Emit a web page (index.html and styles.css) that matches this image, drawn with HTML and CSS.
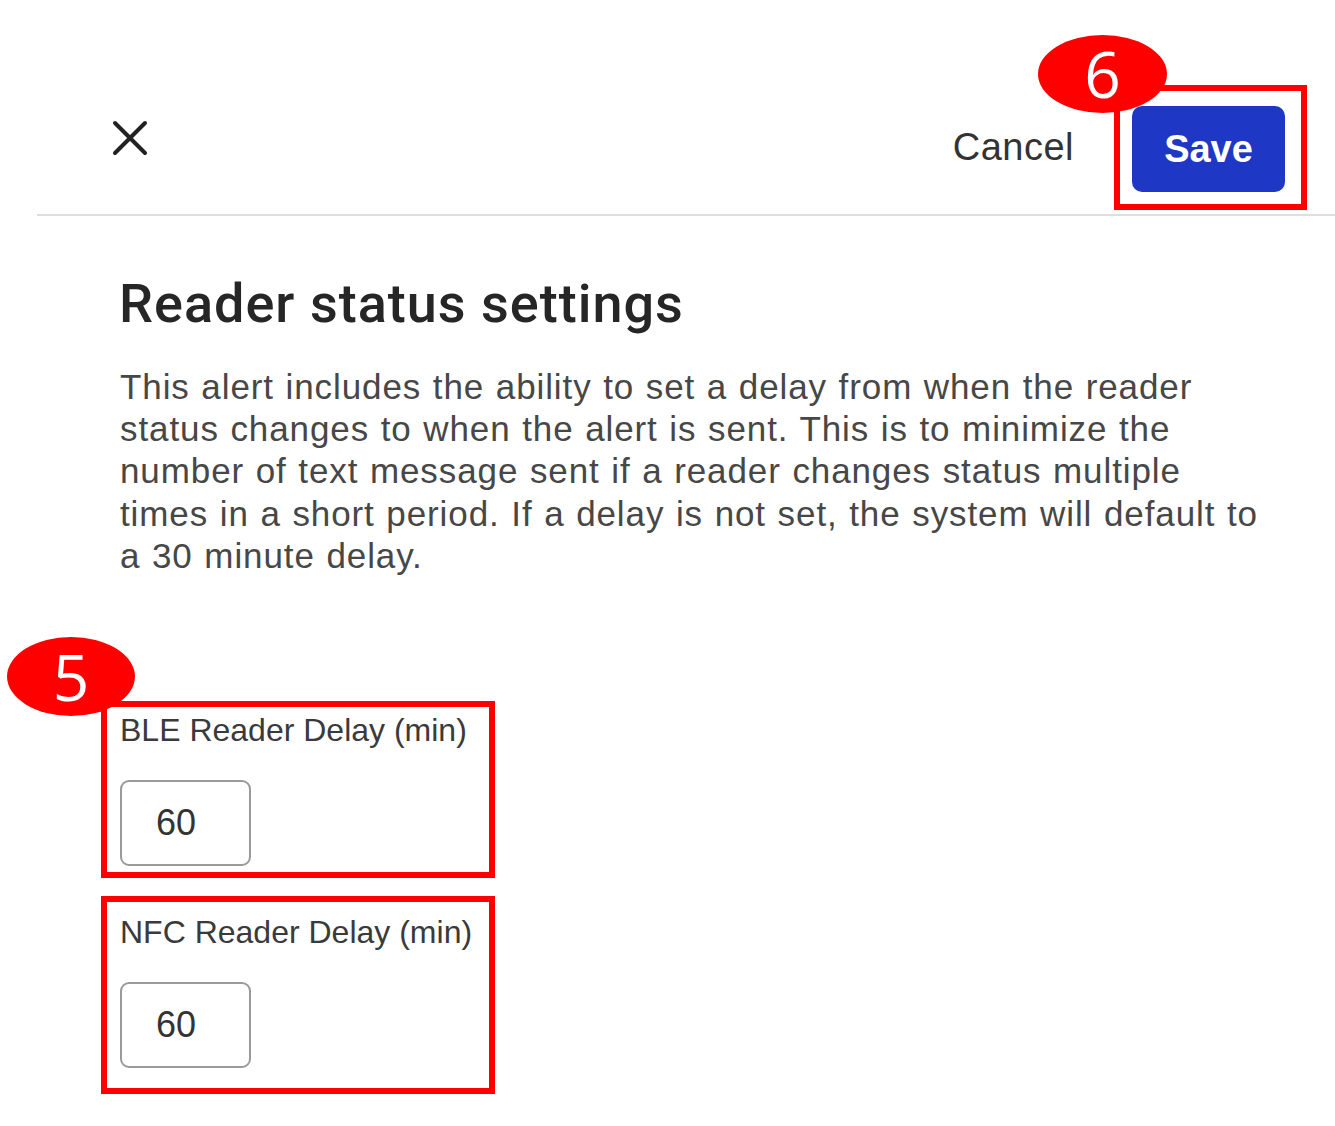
FILE: index.html
```html
<!DOCTYPE html>
<html lang="en">
<head>
    <meta charset="UTF-8">
    <meta name="viewport" content="width=device-width, initial-scale=1.0">
    <title>Reader status settings</title>
    <link rel="stylesheet" href="styles.css">
</head>
<body>

    <div class="panel">
        <div class="panel-header">
            <button class="close-btn" aria-label="Close">
                <svg width="36" height="36" viewBox="0 0 36 36">
                    <path d="M3 3 L33 33 M33 3 L3 33" stroke="#222" stroke-width="4" stroke-linecap="round" fill="none"/>
                </svg>
            </button>
            <div class="header-actions">
                <button class="cancel-btn">Cancel</button>
                <div class="callout callout-save">
                    <span class="marker marker-6">6</span>
                    <button class="save-btn">Save</button>
                </div>
            </div>
        </div>

        <div class="content">
            <h2 class="title">Reader status settings</h2>
            <p class="description">
                This alert includes the ability to set a delay from when the reader<br>
                status changes to when the alert is sent. This is to minimize the<br>
                number of text message sent if a reader changes status multiple<br>
                times in a short period. If a delay is not set, the system will default to<br>
                a 30 minute delay.
            </p>

            <div class="fields">
                <div class="callout field-box">
                    <span class="marker marker-5">5</span>
                    <label for="ble-delay">BLE Reader Delay (min)</label>
                    <input type="text" id="ble-delay" value="60">
                </div>
                <div class="callout field-box field-box-nfc">
                    <label for="nfc-delay">NFC Reader Delay (min)</label>
                    <input type="text" id="nfc-delay" value="60">
                </div>
            </div>
        </div>
    </div>

</body>
</html>
```

FILE: styles.css
```css
body {
    font-family: "Liberation Sans", Arial, sans-serif;
    background-color: #fff;
    margin: 0;
    color: #222;
}
.panel {
    width: 1335px;
}
.panel-header {
    display: flex;
    align-items: center;
    margin-left: 37px;
    padding: 85px 28px 4px 75px;
    border-bottom: 2px solid #dedede;
}
.close-btn {
    background: none;
    border: none;
    padding: 0;
    width: 36px;
    height: 36px;
    margin-bottom: 19px;
    cursor: pointer;
}
.close-btn svg {
    display: block;
}
.header-actions {
    margin-left: auto;
    display: flex;
    align-items: center;
}
.cancel-btn {
    background: none;
    border: none;
    padding: 0;
    font-family: inherit;
    font-size: 38px;
    letter-spacing: 0.5px;
    color: #333;
    margin-right: 40px;
    cursor: pointer;
}
.callout {
    position: relative;
    border: 6px solid #f00;
}
.callout-save {
    padding: 15px 16px 12px 12px;
}
.save-btn {
    display: block;
    width: 153px;
    height: 86px;
    background-color: #1e37c4;
    color: white;
    border: none;
    border-radius: 10px;
    font-family: inherit;
    font-size: 38px;
    font-weight: bold;
    cursor: pointer;
}
.marker {
    position: absolute;
    display: flex;
    align-items: center;
    justify-content: center;
    background-color: #f00;
    color: white;
    border-radius: 50%;
    font-family: "Open Sans", sans-serif;
    font-size: 64px;
    line-height: 1;
    z-index: 2;
}
.marker-6 {
    width: 129px;
    height: 78px;
    left: -82px;
    top: -56px;
}
.marker-5 {
    width: 128px;
    height: 79px;
    left: -100px;
    top: -70px;
}
.content {
    padding-left: 101px;
}
.title {
    font-family: Roboto, "Liberation Sans", sans-serif;
    font-size: 54px;
    font-weight: 500;
    line-height: 60px;
    letter-spacing: 1px;
    margin: 58px 0 0 18px;
    color: #262626;
}
.description {
    font-size: 35px;
    line-height: 42.2px;
    letter-spacing: 0.9px;
    word-spacing: 1px;
    color: #474747;
    margin: 32px 0 0 19px;
    white-space: nowrap;
}
.fields {
    margin-top: 124px;
    display: flex;
    flex-direction: column;
    gap: 18px;
    width: 394px;
}
.field-box {
    padding: 3px 12px 6px 13px;
}
.field-box-nfc {
    padding-top: 10px;
    padding-bottom: 20px;
}
.field-box label {
    display: block;
    font-size: 32px;
    line-height: 40px;
    color: #3a3a3a;
    margin-bottom: 30px;
}
.field-box input {
    display: block;
    box-sizing: border-box;
    width: 131px;
    height: 86px;
    padding: 0 0 0 34px;
    border: 2px solid #9a9a9a;
    border-radius: 9px;
    font-family: inherit;
    font-size: 36px;
    color: #333;
}
```
